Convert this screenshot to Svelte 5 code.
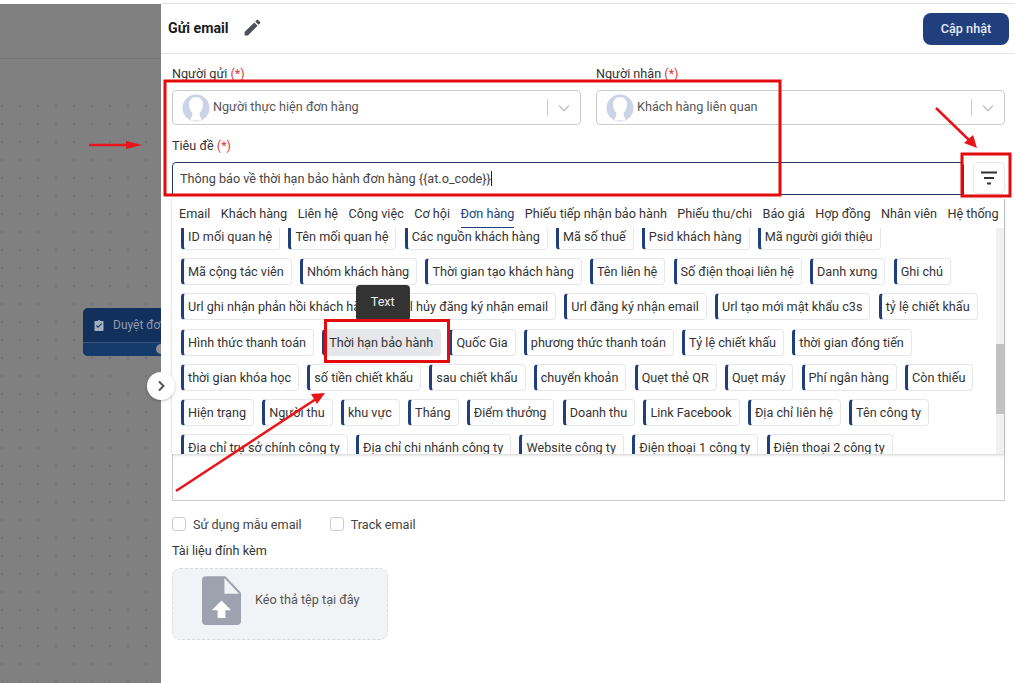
<script>
	const tabs = ['Email', 'Khách hàng', 'Liên hệ', 'Công việc', 'Cơ hội', 'Đơn hàng', 'Phiếu tiếp nhận bảo hành', 'Phiếu thu/chi', 'Báo giá', 'Hợp đồng', 'Nhân viên', 'Hệ thống'];
	const activeTab = 'Đơn hàng';

	const tags = [
		'ID mối quan hệ', 'Tên mối quan hệ', 'Các nguồn khách hàng', 'Mã số thuế', 'Psid khách hàng', 'Mã người giới thiệu',
		'Mã cộng tác viên', 'Nhóm khách hàng', 'Thời gian tạo khách hàng', 'Tên liên hệ', 'Số điện thoại liên hệ', 'Danh xưng', 'Ghi chú',
		'Url ghi nhận phản hồi khách hàng', 'Url hủy đăng ký nhận email', 'Url đăng ký nhận email', 'Url tạo mới mật khẩu c3s', 'tỷ lệ chiết khấu',
		'Hình thức thanh toán', 'Thời hạn bảo hành', 'Quốc Gia', 'phương thức thanh toán', 'Tỷ lệ chiết khấu', 'thời gian đóng tiến',
		'thời gian khóa học', 'số tiền chiết khấu', 'sau chiết khấu', 'chuyển khoản', 'Quẹt thẻ QR', 'Quẹt máy', 'Phí ngân hàng', 'Còn thiếu',
		'Hiện trạng', 'Người thu', 'khu vực', 'Tháng', 'Điểm thưởng', 'Doanh thu', 'Link Facebook', 'Địa chỉ liên hệ', 'Tên công ty',
		'Địa chỉ trụ sở chính công ty', 'Địa chỉ chi nhánh công ty', 'Website công ty', 'Điện thoại 1 công ty', 'Điện thoại 2 công ty'
	];
	const hovered = 'Thời hạn bảo hành';
</script>

<div class="page">
	<aside class="canvas">
		<div class="canvas-head"></div>
		<div class="canvas-grid"></div>
		<div class="node">
			<div class="node-title">
				<svg width="12" height="13" viewBox="0 0 24 24"><path fill="#a4afc0" d="M19 3h-4.2C14.4 1.8 13.300 1 12 1s-2.400.8-2.800 2H5c-1.100 0-2 .9-2 2v16c0 1.100.9 2 2 2h14c1.100 0 2-.9 2-2V5c0-1.100-.9-2-2-2zm-9 14-4-4 1.400-1.400 2.600 2.600 6.600-6.600L18 9l-8 8z" /></svg>
				<span class="node-name">Duyệt đơn</span>
			</div>
			<div class="node-foot"><span class="node-dot"></span></div>
		</div>
	</aside>

	<main class="panel">
		<button class="collapse" aria-label="Thu gọn">
			<svg width="14" height="14" viewBox="0 0 14 14"><path d="M5 2.500 9.500 7 5 11.500" fill="none" stroke="#555" stroke-width="2" /></svg>
		</button>

		<header class="head">
			<div class="head-title">
				<h1>Gửi email</h1>
				<svg width="21" height="21" viewBox="0 0 24 24"><path fill="#4b5058" d="M3 17.250V21h3.750L17.810 9.940l-3.750-3.750L3 17.250zM20.710 7.040a1 1 0 0 0 0-1.410l-2.340-2.340a1 1 0 0 0-1.410 0l-1.830 1.830 3.750 3.750 1.830-1.830z" /></svg>
			</div>
			<button class="save">Cập nhật</button>
		</header>

		<div class="body">
			<div class="selects">
				{#each [['Người gửi', 'Người thực hiện đơn hàng'], ['Người nhận', 'Khách hàng liên quan']] as [label, value]}
					<div class="field">
						<div class="label">{label} <span class="req">(*)</span></div>
						<div class="select">
							<svg class="avatar" width="28" height="28" viewBox="0 0 28 28">
								<circle cx="14" cy="14" r="13.500" fill="#cad4e6" />
								<path fill="#fff" d="M14 3c-4.500 0-7 3.500-7 7.500 0 3.500 1.500 6 3 8 .8 1.200.5 3-.5 4.500-.6.900-1 2-1 3.500h11c0-1.500-.4-2.600-1-3.500-1-1.500-1.300-3.300-.5-4.500 1.500-2 3-4.500 3-8C21 6.500 18.500 3 14 3z" />
							</svg>
							<span class="select-value">{value}</span>
							<span class="select-sep"></span>
							<svg width="14" height="14" viewBox="0 0 14 14"><path d="M2 4.500 7 9.500 12 4.500" fill="none" stroke="#c4c4c4" stroke-width="1.600" /></svg>
						</div>
					</div>
				{/each}
			</div>

			<div class="label subject-label">Tiêu đề <span class="req">(*)</span></div>
			<div class="subject">
				<div class="subject-input">Thông báo về thời hạn bảo hành đơn hàng {'{{at.o_code}}'}<span class="caret"></span></div>
				<button class="filter" aria-label="Lọc">
					<svg width="18" height="14" viewBox="0 0 18 14"><path d="M1 1.500h16M4 7h10M7 12.500h4" stroke="#333" stroke-width="2" fill="none" /></svg>
				</button>
			</div>

			<div class="editor">
				<div class="picker">
					<nav class="tabs">
						{#each tabs as tab}
							<span class="tab" class:active={tab === activeTab}>{tab}</span>
						{/each}
					</nav>
					<div class="picker-body">
						<div class="tags">
							{#each tags as tag}
								<span class="tag" class:hover={tag === hovered}>
									{tag}
									{#if tag === hovered}
										<span class="tooltip">Text</span>
									{/if}
								</span>
							{/each}
						</div>
						<div class="track"><div class="thumb"></div></div>
					</div>
				</div>
			</div>

			<div class="checks">
				<label class="check"><span class="box"></span>Sử dụng mẫu email</label>
				<label class="check"><span class="box"></span>Track email</label>
			</div>

			<div class="label attach-label">Tài liệu đính kèm</div>
			<div class="drop">
				<svg width="39" height="49" viewBox="0 0 40 50">
					<path fill="#9ca3af" d="M4 0h20l16 17v29a4 4 0 0 1-4 4H4a4 4 0 0 1-4-4V4a4 4 0 0 1 4-4z" />
					<path fill="#f1f3f6" d="M23 2 38 18H23z" />
					<path fill="#fff" d="M20 25 30 35h-6v8h-8v-8h-6z" />
				</svg>
				<span>Kéo thả tệp tại đây</span>
			</div>
		</div>
	</main>

	<!-- screenshot annotations -->
	<svg class="marks" width="1015" height="683" viewBox="0 0 1015 683">
		<g fill="none" stroke="#e30b0b" stroke-width="3">
			<rect x="165" y="81" width="615" height="114" />
			<rect x="962" y="154" width="48" height="42" />
			<rect x="325.500" y="320.500" width="123" height="41" />
		</g>
		<g stroke="#e8141a" stroke-width="2.500" fill="#e8141a">
			<line x1="89" y1="145" x2="130" y2="145" />
			<path stroke="none" d="M126 141 142 145 126 149z" />
			<line x1="936" y1="108" x2="970" y2="141" />
			<path stroke="none" d="M964 143 973 135 977 148z" />
			<line x1="176" y1="491" x2="316" y2="399" />
			<path stroke="none" d="M311 394 317 404 325 393z" />
		</g>
	</svg>
</div>

<style>
	:global(body) {
		margin: 0;
		background: #fff;
	}

	.page {
		position: relative;
		display: flex;
		height: 680px;
		padding-top: 3px;
		overflow: hidden;
		font-family: Roboto, 'Liberation Sans', sans-serif;
		font-size: 12.650px;
		color: #333;
	}

	.canvas {
		position: relative;
		width: 161px;
		flex: none;
		display: flex;
		flex-direction: column;
		margin-top: 1px;
		background-color: #808080;
	}

	.canvas-head {
		height: 54px;
		flex: none;
		border-bottom: 1px solid #757575;
	}

	.canvas-grid {
		flex: 1;
		margin-top: 45px;
		background-image: radial-gradient(circle at 9px 9px, #747474 0.9px, transparent 1.3px);
		background-size: 18px 18px;
		background-position: -7px -7px;
	}

	.node {
		position: absolute;
		left: 83px;
		top: 304px;
		width: 78px;
		height: 48px;
		background: #12305c;
		border-radius: 5px 0 0 5px;
		overflow: hidden;
	}

	.node-title {
		display: flex;
		align-items: center;
		gap: 8px;
		box-sizing: border-box;
		height: 35px;
		padding-left: 10px;
		font-size: 12px;
		color: #8f9cb0;
		white-space: nowrap;
		border-bottom: 1px solid #3a5578;
	}

	.node-title svg {
		flex: none;
	}

	.node-name {
		flex: none;
	}

	.node-foot {
		position: relative;
		height: 13px;
		background: #153a6c;
	}

	.node-dot {
		position: absolute;
		right: -5px;
		top: 1px;
		width: 10px;
		height: 10px;
		border-radius: 50%;
		background: #8a8f96;
	}

	.panel {
		position: relative;
		flex: 1;
		min-width: 0;
		background: #fff;
		border-top: 1px solid #e5e5e5;
	}

	.collapse {
		position: absolute;
		left: -14px;
		top: 368px;
		width: 28px;
		height: 28px;
		padding: 0;
		display: flex;
		align-items: center;
		justify-content: center;
		border: none;
		border-radius: 50%;
		background: #fff;
		box-shadow: 0 1px 3px rgba(0, 0, 0, 0.25);
	}

	.head {
		display: flex;
		align-items: center;
		justify-content: space-between;
		height: 49px;
		padding: 0 6px 0 7px;
		border-bottom: 1px solid #e5e7eb;
	}

	.head-title {
		display: flex;
		align-items: center;
		gap: 13px;
		margin-top: -2px;
	}

	h1 {
		margin: 0;
		font-size: 14.200px;
		font-weight: 700;
		color: #1a1a1a;
	}

	.save {
		width: 86px;
		height: 32px;
		border: none;
		border-radius: 8px;
		background: #213f7d;
		color: #e8ebf2;
		font: 500 12.650px Roboto, sans-serif;
	}

	.body {
		padding: 11px 10px 0 11px;
	}

	.selects {
		display: grid;
		grid-template-columns: 409px 409px;
		gap: 15px;
	}

	.label {
		height: 17px;
		line-height: 17px;
		color: #333;
	}

	.req {
		color: #d9383a;
	}

	.select {
		display: flex;
		align-items: center;
		box-sizing: border-box;
		height: 35px;
		margin-top: 8px;
		padding: 0 9px;
		border: 1px solid #ccc;
		border-radius: 4px;
	}

	.avatar {
		flex: none;
		margin-right: 3px;
	}

	.select-value {
		flex: 1;
		color: #555;
		margin-top: -2px;
	}

	.select-sep {
		width: 1px;
		height: 17px;
		margin-right: 9px;
		background: #ccc;
	}

	.subject-label {
		margin-top: 12px;
	}

	.subject {
		display: flex;
		gap: 9px;
		margin-top: 8px;
	}

	.subject-input {
		flex: 1;
		box-sizing: border-box;
		height: 33px;
		line-height: 32px;
		padding: 0 7px;
		border: 1px solid #1e3a5f;
		border-radius: 4px 4px 0 0;
		color: #444;
	}

	.caret {
		display: inline-block;
		width: 1px;
		height: 15px;
		vertical-align: -3px;
		background: #222;
	}

	.filter {
		width: 32px;
		height: 32px;
		padding: 0;
		flex: none;
		display: flex;
		align-items: center;
		justify-content: center;
		background: #fff;
		border: 1px solid #e5e7eb;
		border-radius: 5px;
	}

	.editor {
		box-sizing: border-box;
		height: 302px;
		margin-top: 4px;
		border: solid #ccc;
		border-width: 0 1px 1px;
	}

	.picker {
		height: 255px;
		margin-left: -1px;
		box-shadow: 0 1px 3px rgba(0, 0, 0, 0.2);
		background: #fff;
		display: flex;
		flex-direction: column;
	}

	.tabs {
		display: flex;
		gap: 10.500px;
		flex: none;
		height: 29px;
		padding-left: 7px;
		line-height: 30px;
		white-space: nowrap;
	}

	.tab.active {
		color: #213f7d;
		box-shadow: inset 0 -1px 0 #213f7d;
	}

	.picker-body {
		flex: 1;
		min-height: 0;
		display: flex;
		overflow: hidden;
	}

	.tags {
		flex: 1;
		min-width: 0;
		display: flex;
		flex-wrap: wrap;
		align-content: flex-start;
		gap: 8.200px 8.200px;
		padding: 0 6px 0 9px;
		margin-top: -5px;
		height: 240px;
	}

	.tag {
		position: relative;
		box-sizing: border-box;
		height: 27px;
		line-height: 25px;
		padding: 0 7px 0 4px;
		border: 1px solid #e5e7eb;
		border-left: 3px solid #213f7d;
		border-radius: 4px;
		color: #333;
		white-space: nowrap;
	}

	.tag.hover {
		background: #e5e7eb;
	}

	.tooltip {
		position: absolute;
		left: 50%;
		bottom: calc(100% + 9px);
		transform: translateX(-50%);
		padding: 0 15px;
		height: 36px;
		line-height: 34px;
		border-radius: 4px;
		background: #333;
		color: #eee;
	}

	.track {
		width: 8px;
		flex: none;
		background: #f1f1f1;
	}

	.thumb {
		height: 70px;
		margin-top: 116px;
		background: #c1c1c1;
	}

	.checks {
		display: flex;
		gap: 28px;
		margin-top: 15px;
	}

	.check {
		display: flex;
		align-items: center;
		gap: 7px;
		height: 16px;
		color: #444;
	}

	.box {
		box-sizing: border-box;
		width: 14px;
		height: 14px;
		border: 1px solid #ccc;
		border-radius: 3px;
	}

	.attach-label {
		margin-top: 10px;
	}

	.drop {
		display: flex;
		align-items: flex-start;
		gap: 14px;
		box-sizing: border-box;
		width: 216px;
		height: 72px;
		margin-top: 9px;
		padding: 7px 0 0 29px;
		background: #f1f3f6;
		border: 1px dashed #d8dde5;
		border-radius: 8px;
		color: #555;
	}

	.drop span {
		margin-top: 16px;
	}

	.marks {
		position: absolute;
		left: 0;
		top: 0;
		pointer-events: none;
	}
</style>
